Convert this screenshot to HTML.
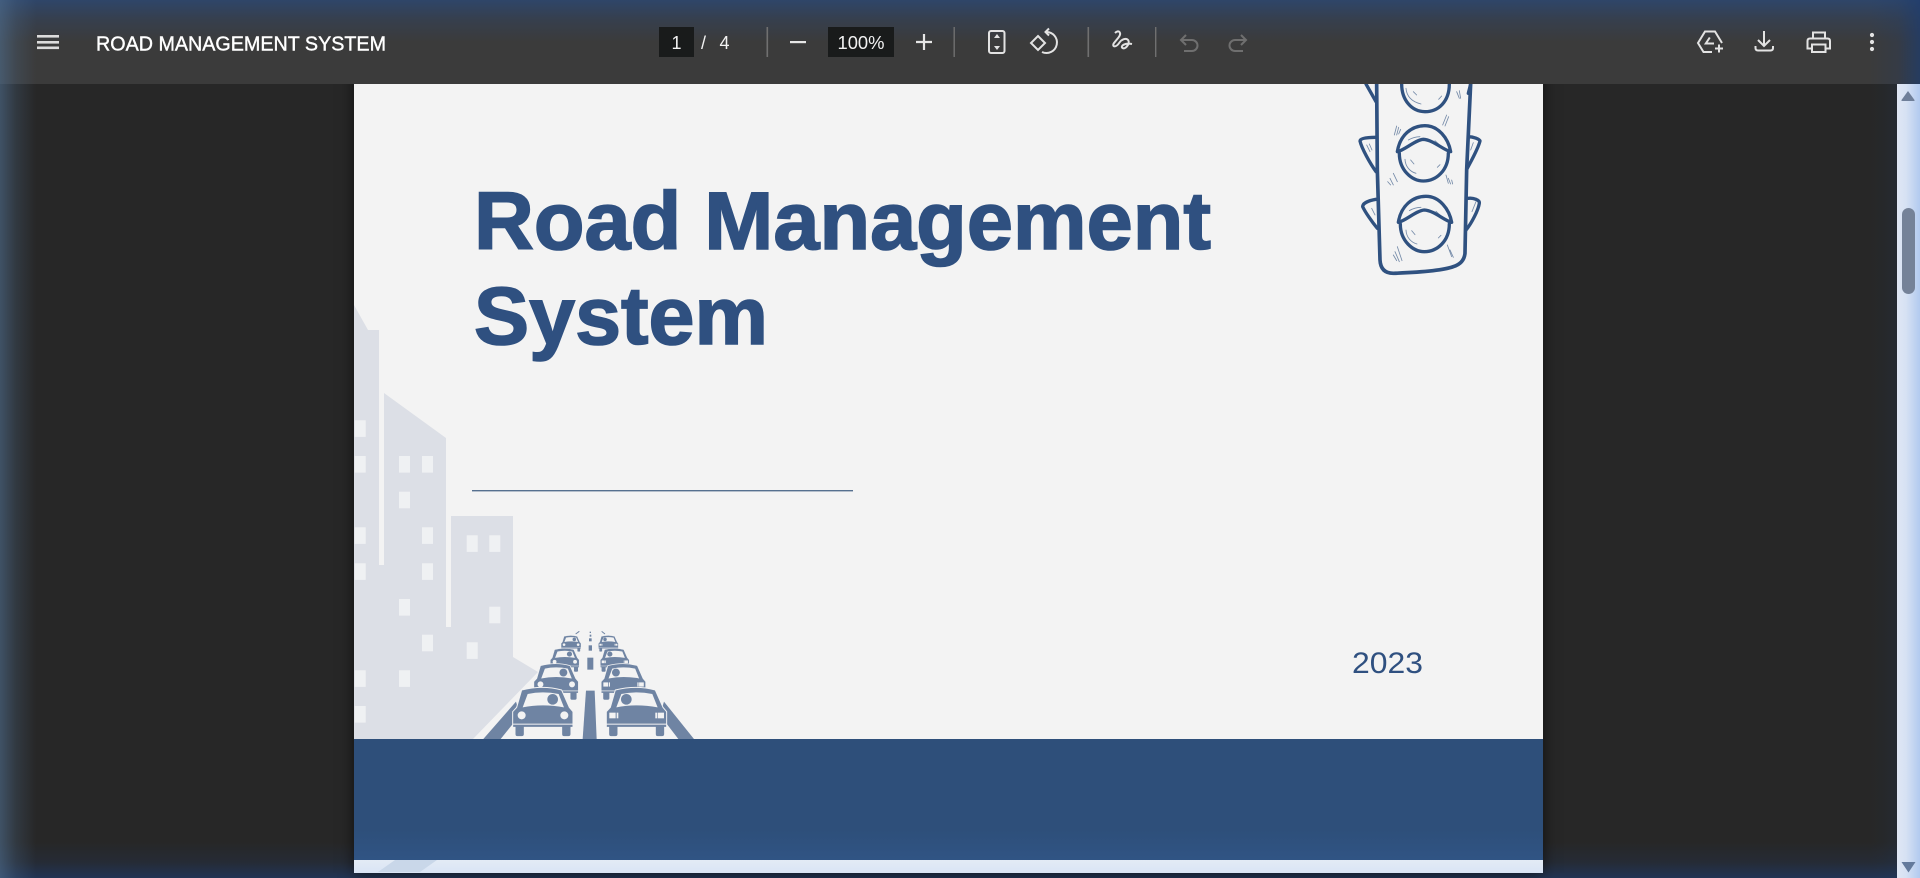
<!DOCTYPE html>
<html>
<head>
<meta charset="utf-8">
<style>
html,body{margin:0;padding:0;width:1920px;height:878px;overflow:hidden;background:#272727}
body{position:relative;font-family:"Liberation Sans",sans-serif}
.layer{position:absolute;left:0;top:0;width:1920px;height:878px}
#page-shadow{position:absolute;left:354px;top:60px;width:1189px;height:813px;box-shadow:0 0 14px rgba(0,0,0,.6)}
#glow{position:absolute;left:0;top:0;width:1920px;height:878px;background:
 linear-gradient(to right,rgba(78,108,140,.62),rgba(78,108,140,.26) 16px,rgba(78,108,140,0) 36px),
 linear-gradient(to top,rgba(32,55,95,.8),rgba(32,55,95,.25) 16px,rgba(32,55,95,0) 36px),
 linear-gradient(to left,rgba(30,55,90,.22) 23px,rgba(30,55,90,.08) 36px,rgba(30,55,90,0) 50px)}
#scroll{position:absolute;left:1897px;top:84px;width:23px;height:794px;background:linear-gradient(to right,#e0e7f4,#d6e1f3 40%,#b2caef)}
#thumb{position:absolute;left:5px;top:124px;width:13px;height:86px;border-radius:6.5px;background:#758298}
</style>
</head>
<body>
<div id="glow"></div>
<div id="page-shadow"></div>

<svg class="layer" viewBox="0 0 1920 878" xmlns="http://www.w3.org/2000/svg">
  <defs>
    <linearGradient id="blueband" x1="0" y1="0" x2="0" y2="1">
      <stop offset="0" stop-color="#2e4f7a"/><stop offset=".75" stop-color="#2e4f7a"/><stop offset="1" stop-color="#305484"/>
    </linearGradient>
    <linearGradient id="lightband" x1="0" y1="0" x2="0" y2="1">
      <stop offset="0" stop-color="#e3ebf5"/><stop offset="1" stop-color="#d9e4f5"/>
    </linearGradient>
    <g id="carL">
      <path d="M125 210Q188 194 245 210L268 262L279 275V322H273V342Q273 350 265 350H252Q245 350 245 342V322H133V342Q133 350 125 350H112Q105 350 105 342V322H98V275L110 262Z" fill="#6f84a3" stroke="#f3f3f3" stroke-width="3"/>
      <path d="M128 262L143 222Q188 212 236 222L252 262Q188 250 128 262Z" fill="#f3f3f3"/>
      <circle cx="218" cy="238" r="16" fill="#6f84a3"/>
      <circle cx="125" cy="286" r="12" fill="#f3f3f3"/>
      <circle cx="253" cy="286" r="12" fill="#f3f3f3"/>
      <rect x="98" y="311" width="181" height="3" fill="#f3f3f3"/>
    </g>
    <g id="carR">
      <path d="M125 210Q188 194 245 210L268 262L279 275V322H273V342Q273 350 265 350H252Q245 350 245 342V322H133V342Q133 350 125 350H112Q105 350 105 342V322H98V275L110 262Z" fill="#6f84a3" stroke="#f3f3f3" stroke-width="3"/>
      <path d="M128 262L143 222Q188 212 236 222L252 262Q188 250 128 262Z" fill="#f3f3f3"/>
      <circle cx="158" cy="238" r="16" fill="#6f84a3"/>
      <rect x="107" y="278" width="19" height="17" fill="#f3f3f3"/><rect x="129" y="278" width="5" height="17" fill="#f3f3f3"/>
      <rect x="245" y="278" width="5" height="17" fill="#f3f3f3"/><rect x="252" y="278" width="19" height="17" fill="#f3f3f3"/>
      <rect x="98" y="311" width="181" height="3" fill="#f3f3f3"/>
    </g>
    <g id="lamp" fill="none" stroke="#2f5180" stroke-width="10" stroke-linejoin="round" stroke-linecap="round">
      <path d="M172 245C180 195 215 167 255 167C295 167 325 205 332 245C310 240 280 210 250 208C225 210 195 240 172 245Z" fill="#f3f3f3"/>
      <path d="M178 250C178 300 215 333 250 333C290 333 325 300 325 250"/>
      <path d="M195 268C196 290 210 305 228 310M205 210Q222 200 240 200M285 212L298 224M212 270L222 282M292 292L300 284" stroke-width="2.5" opacity=".65"/>
    </g>
  </defs>

  <!-- page -->
  <rect x="354" y="84" width="1189" height="655" fill="#f3f3f3"/>
  <rect x="354" y="739" width="1189" height="121" fill="url(#blueband)"/>
  <rect x="354" y="860" width="1189" height="13" fill="url(#lightband)"/>
  <polygon points="378,872 420,872 437,860 395,860" fill="#c9d7e9"/>

  <!-- buildings -->
  <path d="M354 305L368 330H379V565H384V393L446 438V627H451V516H513V657L538 672L473 739H354Z" fill="#dcdfe6"/>
  <g fill="#eff1f3">
    <rect x="354.7" y="420.3" width="11" height="16.6"/><rect x="354.7" y="456" width="11" height="16.6"/>
    <rect x="354.7" y="527.3" width="11" height="16.6"/><rect x="354.7" y="563.3" width="11" height="16.6"/>
    <rect x="354.7" y="670.3" width="11" height="16.6"/><rect x="354.7" y="706" width="11" height="16.6"/>
    <rect x="399" y="456" width="11" height="16.6"/><rect x="399" y="491.7" width="11" height="16.6"/>
    <rect x="399" y="599" width="11" height="16.6"/><rect x="399" y="670.3" width="11" height="16.6"/>
    <rect x="422" y="456" width="11" height="16.6"/><rect x="422" y="527.3" width="11" height="16.6"/>
    <rect x="422" y="563.3" width="11" height="16.6"/><rect x="422" y="634.7" width="11" height="16.6"/>
    <rect x="466.7" y="535.3" width="11" height="16.6"/><rect x="466.7" y="642.3" width="11" height="16.6"/>
    <rect x="489.3" y="535.3" width="11" height="16.6"/><rect x="489.3" y="606.7" width="11" height="16.6"/>
  </g>

  <!-- road + cars -->
  <g transform="translate(480 620) scale(.3333)">
    <polygon points="10,357 62,357 120,285 108,245" fill="#6f84a3"/>
    <polygon points="595,357 642,357 552,245 540,285" fill="#6f84a3"/>
    <polygon points="308,357 350,357 344,212 318,212" fill="#6f84a3"/>
    <g fill="#6f84a3">
      <rect x="322" y="113" width="18" height="36"/><rect x="326" y="76" width="10" height="16"/>
      <rect x="327" y="55" width="8" height="9"/><rect x="329" y="44" width="5" height="6"/><rect x="329" y="35" width="4" height="4"/>
    </g>
    <use href="#carL" transform="translate(273 45) scale(.33) translate(-188 -198)"/>
    <use href="#carL" transform="translate(254 83) scale(.48) translate(-188 -198)"/>
    <use href="#carL" transform="translate(228 128) scale(.74) translate(-188 -198)"/>
    <use href="#carL"/>
    <use href="#carR" transform="translate(385 45) scale(.33) translate(-188 -198)"/>
    <use href="#carR" transform="translate(404 83) scale(.48) translate(-188 -198)"/>
    <use href="#carR" transform="translate(430 128) scale(.74) translate(-188 -198)"/>
    <use href="#carR" transform="translate(281 0)"/>
    <path d="M287 42L298 34M375 42L365 34" stroke="#6f84a3" stroke-width="3" fill="none"/>
  </g>

  <!-- title -->
  <text x="474" y="249" font-family="Liberation Sans" font-weight="700" font-size="82" fill="#2f5080" stroke="#2f5080" stroke-width="1.6" textLength="737" lengthAdjust="spacingAndGlyphs">Road Management</text>
  <text x="474" y="344" font-family="Liberation Sans" font-weight="700" font-size="82" fill="#2f5080" stroke="#2f5080" stroke-width="1.6" textLength="294" lengthAdjust="spacingAndGlyphs">System</text>
  <rect x="472" y="490" width="381" height="1.4" fill="#56708f"/>
  <text x="1352" y="673" font-family="Liberation Sans" font-size="30" fill="#2f5080" textLength="71" lengthAdjust="spacingAndGlyphs">2023</text>

  <!-- traffic light -->
  <g transform="translate(1340 70) scale(.3333)">
    <g fill="none" stroke="#2f5180" stroke-width="10" stroke-linecap="round" stroke-linejoin="round">
      <path d="M78 42L108 95"/>
      <path d="M108 202C80 202 60 205 60 213C65 235 90 280 108 305"/>
      <path d="M108 388C85 392 68 400 68 410C75 425 95 455 112 475"/>
      <path d="M392 42L385 70"/>
      <path d="M385 200C400 200 420 208 420 213C415 235 395 270 382 295"/>
      <path d="M385 385C400 383 420 390 418 400C415 420 395 460 378 480"/>
      <path d="M110 42L112 300L120 570Q122 610 160 610Q300 605 340 590Q372 580 375 550L380 300L392 42" stroke-width="11"/>
      <path d="M185 42C185 90 215 125 255 125C295 125 328 95 328 42"/>
      <path d="M198 55C200 80 215 95 243 102M220 65L230 75M296 88L305 78M350 65L358 85M358 62L362 85" stroke-width="2.5" opacity=".65"/>
      <path d="M170 168L163 195M176 172L170 195M182 178L176 192M320 135L308 165M326 140L315 168M143 335L152 345M150 325L160 345M160 310L172 335M318 315L325 340M325 325L332 342M335 330L338 342M172 530L186 572M165 545L178 575M160 555L170 572M322 525L335 560M330 540L340 562" stroke-width="2.5" opacity=".65"/>
      <path d="M80 225L90 245M88 222L96 240M95 415L105 435M400 218L392 240M408 395L396 425" stroke-width="2.5" opacity=".65"/>
    </g>
    <use href="#lamp"/>
    <use href="#lamp" transform="translate(3 212)"/>
  </g>
</svg>

<!-- toolbar over page so the traffic light clips at y=84 -->
<div style="position:absolute;left:0;top:0;width:1920px;height:84px;overflow:hidden;background:#3b3b3b">
  <div style="position:absolute;left:0;top:0;width:1920px;height:84px;background:
 linear-gradient(to right,rgba(78,108,140,.62),rgba(78,108,140,.26) 16px,rgba(78,108,140,0) 36px),
 linear-gradient(to left,rgba(30,60,110,.72),rgba(30,60,110,.2) 22px,rgba(30,60,110,0) 50px),
 linear-gradient(to bottom,rgba(44,72,115,.82),rgba(44,72,115,.32) 20px,rgba(44,72,115,0) 42px)"></div>
</div>

<svg class="layer" viewBox="0 0 1920 878" xmlns="http://www.w3.org/2000/svg">
  <g fill="#dcdcdc">
    <rect x="37" y="35" width="22" height="2.6"/><rect x="37" y="41" width="22" height="2.6"/><rect x="37" y="46.5" width="22" height="2.6"/>
  </g>
  <text x="96" y="50.5" font-family="Liberation Sans" font-size="20.5" fill="#fff" stroke="#fff" stroke-width=".4" textLength="290" lengthAdjust="spacingAndGlyphs">ROAD MANAGEMENT SYSTEM</text>

  <rect x="659" y="27" width="35" height="30" fill="#191b1b"/>
  <text x="676.5" y="49" font-family="Liberation Sans" font-size="18" fill="#f2f2f2" text-anchor="middle">1</text>
  <text x="703.5" y="49" font-family="Liberation Sans" font-size="18" fill="#f2f2f2" text-anchor="middle">/</text>
  <text x="724.5" y="49" font-family="Liberation Sans" font-size="18" fill="#f2f2f2" text-anchor="middle">4</text>
  <rect x="766.5" y="27" width="1.6" height="30" fill="#707070"/>
  <rect x="790" y="41" width="16" height="2.2" fill="#e6e6e6"/>
  <rect x="828" y="27" width="66" height="30" fill="#191b1b"/>
  <text x="861" y="49" font-family="Liberation Sans" font-size="18" fill="#f2f2f2" text-anchor="middle" textLength="47" lengthAdjust="spacingAndGlyphs">100%</text>
  <path d="M916 42H932M924 34V50" stroke="#e6e6e6" stroke-width="2.2" fill="none"/>
  <rect x="953.5" y="27" width="1.4" height="30" fill="#707070"/>
  <rect x="1087.5" y="27" width="1.6" height="30" fill="#707070"/>
  <rect x="1155" y="27" width="1.4" height="30" fill="#707070"/>

  <g fill="none" stroke="#e3e3e3" stroke-width="2">
    <rect x="989" y="31" width="15.5" height="22" rx="2"/>
    <path d="M1037 36L1044 43L1037 50L1030 43Z" transform="translate(1 0)"/>
    <path d="M1046 32A10.5 10.5 0 1 1 1042 52"/>
    <path d="M1049 28.5L1045.5 32L1049 35.5"/>
    <path d="M1115 33C1119 29 1122 33 1118.5 37.5L1114 43C1111.5 46.5 1115.5 48.5 1119.5 42.5C1121.5 39.5 1126 37.5 1128 40C1130.5 43 1125.5 50 1122.5 48C1120 46 1125 42.5 1132 44"/>
    <path d="M1813 38V32.5H1825V38"/>
    <path d="M1811.5 48.5H1807.5V41Q1807.5 38.5 1810 38.5H1827.5Q1830 38.5 1830 41V48.5H1826"/>
    <rect x="1812" y="44.5" width="13.5" height="7.5"/>
    <path d="M1712 52H1703.5L1698 43L1705 31.5H1715L1722 43"/>
    <path d="M1709.8 37.5L1705.8 43.5H1714"/>
    <path d="M1715 48.5H1723M1719 44.5V52.5"/>
    <path d="M1764 31V46M1758 40L1764 46L1770 40"/>
    <path d="M1755.5 46V48Q1755.5 50.5 1758 50.5H1770.5Q1773 50.5 1773 48V46"/>
  </g>
  <path d="M997 34L994 38H1000ZM997 50L994 46H1000Z" fill="#e3e3e3"/>
  <g fill="none" stroke="#6f6f6f" stroke-width="2">
    <path d="M1186 35L1181 40L1186 45M1181 40H1192A5.5 5.5 0 0 1 1192 51H1184"/>
    <path d="M1241 35L1246 40L1241 45M1246 40H1235A5.5 5.5 0 0 0 1235 51H1243"/>
  </g>
  <circle cx="1872" cy="35" r="2.1" fill="#e3e3e3"/><circle cx="1872" cy="42" r="2.1" fill="#e3e3e3"/><circle cx="1872" cy="49" r="2.1" fill="#e3e3e3"/>
</svg>

<div id="scroll"><div id="thumb"></div></div>
<svg class="layer" viewBox="0 0 1920 878" xmlns="http://www.w3.org/2000/svg">
  <path d="M1908 91L1901.5 100Q1901 101 1902.5 101H1913.5Q1915 101 1914.5 100Z" fill="#6f7f99"/>
  <path d="M1908.5 872.5L1901.5 862H1915.5Z" fill="#647a9c"/>
</svg>
</body>
</html>
